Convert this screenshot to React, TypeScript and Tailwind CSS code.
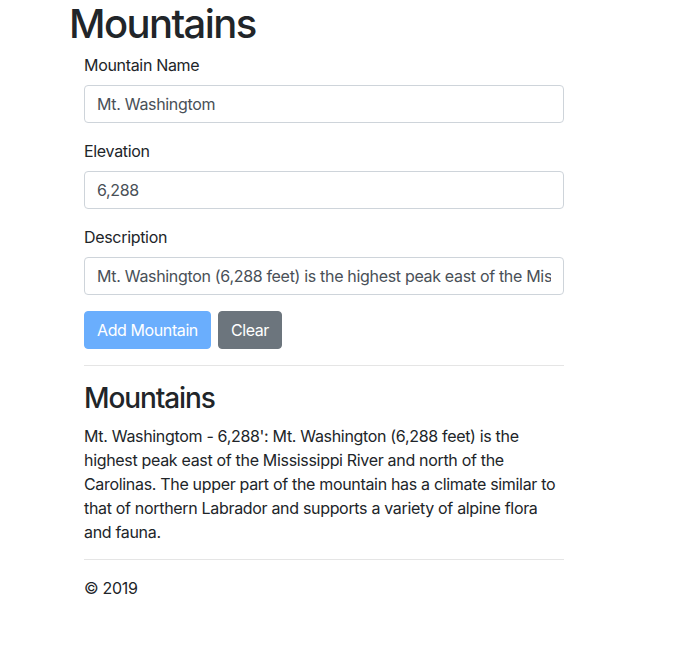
import React, { useState } from "react";

export default function App() {
  const [name, setName] = useState("Mt. Washingtom");
  const [elevation, setElevation] = useState("6,288");
  const [description, setDescription] = useState(
    "Mt. Washington (6,288 feet) is the highest peak east of the Mississippi River and north of the Carolinas. The upper part of the mountain has a climate similar to that of northern Labrador and supports a variety of alpine flora and fauna."
  );

  const inputClass =
    "block w-full h-[38px] px-3 py-1.5 text-base leading-6 tracking-[-0.02em] text-[#495057] bg-white border border-[#ced4da] rounded outline-none";

  return (
    <div className="min-h-screen bg-white text-[#212529] font-['Inter','Liberation_Sans',sans-serif] text-base leading-6 tracking-[-0.02em] pl-[69px]">
      <h1 className="text-[40px] leading-[1.2] font-medium tracking-[-0.04em] mb-[5px]">Mountains</h1>
      <div className="pl-[15px] w-[495px]">
        <form onSubmit={(e) => e.preventDefault()}>
          <div className="mb-4">
            <label className="block mb-2">Mountain Name</label>
            <input className={inputClass} value={name} onChange={(e) => setName(e.target.value)} />
          </div>
          <div className="mb-4">
            <label className="block mb-2">Elevation</label>
            <input className={inputClass} value={elevation} onChange={(e) => setElevation(e.target.value)} />
          </div>
          <div className="mb-4">
            <label className="block mb-2">Description</label>
            <input className={inputClass} value={description} onChange={(e) => setDescription(e.target.value)} />
          </div>
          <div className="flex gap-[7px]">
            <button
              type="submit"
              disabled
              className="h-[38px] px-3 rounded text-white tracking-[-0.025em] bg-[#6aaefd] border border-[#6aaefd]"
            >
              Add Mountain
            </button>
            <button
              type="button"
              onClick={() => {
                setName("");
                setElevation("");
                setDescription("");
              }}
              className="h-[38px] px-3 rounded text-white tracking-[-0.025em] bg-[#6c757d] border border-[#6c757d]"
            >
              Clear
            </button>
          </div>
        </form>
        <hr className="my-4 border-0 border-t border-black/10" />
        <h3 className="text-[28px] leading-[1.2] font-medium tracking-[-0.04em] mb-2">Mountains</h3>
        <p className="mb-[15px]">
          Mt. Washingtom - 6,288': Mt. Washington (6,288 feet) is the highest peak east of the Mississippi River and north
          of the Carolinas. The upper part of the mountain has a climate similar to that of northern Labrador and supports
          a variety of alpine flora and fauna.
        </p>
        <hr className="mb-4 border-0 border-t border-black/10" />
        <p>© 2019</p>
      </div>
    </div>
  );
}
